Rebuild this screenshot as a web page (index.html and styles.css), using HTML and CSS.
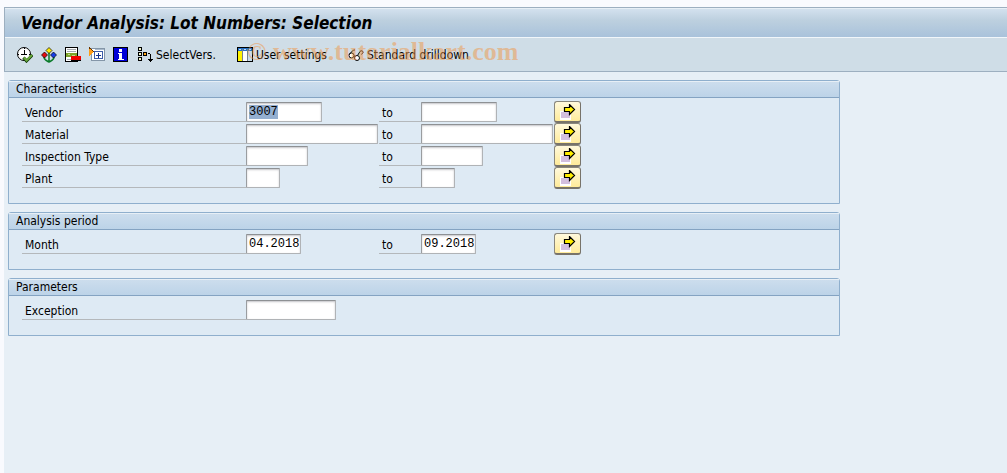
FILE: index.html
```
<!DOCTYPE html>
<html lang="en">
<head>
    <meta charset="UTF-8">
    <meta name="viewport" content="width=device-width, initial-scale=1.0">
    <title>Vendor Analysis: Lot Numbers: Selection</title>
    <link rel="stylesheet" href="styles.css">
</head>
<body>
    <!-- Shared icons -->
    <svg class="defs" width="0" height="0">
        <symbol id="multi" viewBox="0 0 16 16">
            <path fill="#fff" d="M0 7h11v9H0z"/>
            <path fill="#d3bfdf" d="M1 8h9v6H1z"/>
            <path fill="#ffee00" stroke="#000" stroke-width="1.200" d="M4.500 3.500h5v-3l5 5-5 5v-3h-5z"/>
        </symbol>
    </svg>

    <header>
        <h1>Vendor Analysis: Lot Numbers: Selection</h1>
        <div class="toolbar">
            <button class="tool" aria-label="Execute">
                <svg width="16" height="16" viewBox="0 0 16 16">
                    <circle cx="7" cy="7" r="6.500" fill="#fff" stroke="#000"/>
                    <path stroke="#000" fill="none" d="M7.500 3v5M4 7.500h6M7.500 1v1M7.500 12v1M1 7.500h1M12 7.500h1"/>
                    <path stroke="#123c08" stroke-width="3" fill="none" d="M6.500 10.500l3 3.500 6-6"/>
                    <path stroke="#69a83c" stroke-width="2" fill="none" d="M7 10.500l2.500 3 5.500-5.500"/>
                </svg>
            </button>
            <button class="tool" aria-label="Get variant">
                <svg width="16" height="16" viewBox="0 0 16 16">
                    <path stroke="#087a28" stroke-width="1.500" fill="none" d="M8 5v10M3 10c0 3 2 3.500 5 5 3-1.500 5-2 5-5"/>
                    <path fill="#ffe900" stroke="#000" stroke-width=".7" d="M8 .5L11 3.500 8 6.500 5 3.500z"/>
                    <path fill="#e30b12" stroke="#000" stroke-width=".7" d="M3.500 5L6.500 8l-3 3-3-3z"/>
                    <path fill="#163ce8" stroke="#000" stroke-width=".7" d="M12.500 5l3 3-3 3-3-3z"/>
                </svg>
            </button>
            <button class="tool" aria-label="Delete row">
                <svg width="16" height="16" viewBox="0 0 16 16" shape-rendering="crispEdges">
                    <path fill="#fff" stroke="#000" d="M.5.5h12v14H.5z"/>
                    <path fill="#a5a9ae" d="M2 2h9v1H2zM2 4h9v1H2zM2 12h4v1H2z"/>
                    <path fill="#7da329" d="M1 6h11v4H1z"/>
                    <path fill="#c5d98a" d="M3 7h2v1H3zM7 8h3v1H7z"/>
                    <path fill="#f00000" d="M6 9h10v4H6z"/>
                    <path fill="#000" d="M6 13h10v1H6z"/>
                </svg>
            </button>
            <button class="tool" aria-label="Dynamic selections">
                <svg width="16" height="16" viewBox="0 0 16 16" shape-rendering="crispEdges">
                    <path fill="#fff" stroke="#8496a8" d="M2.500 1.500h13v12h-13z"/>
                    <path fill="#a9b9ca" d="M6 2h9v1H6z"/>
                    <path fill="#fff" stroke="#3c5ca8" d="M5.500 4.500h8v7h-8z"/>
                    <path fill="#16328c" d="M9 6h1v5H9zM7 8h5v1H7z"/>
                    <path fill="#ff9c16" d="M0 1l5 4-5 4z"/>
                    <path fill="#603000" d="M0 0h1v2H0zM1 1h1v1H1zM2 2h1v1H2zM3 3h1v1H3zM4 4h1v1H4z"/>
                </svg>
            </button>
            <button class="tool" aria-label="Information">
                <svg width="16" height="16" viewBox="0 0 16 16" shape-rendering="crispEdges">
                    <path fill="#0000d8" stroke="#000" d="M.5.5h14v14H.5z"/>
                    <path fill="#fff" d="M6 2h3v3H6zM5 6h4v6h2v1H5v-1h1V7H5z"/>
                </svg>
            </button>
            <button class="tool">
                <svg width="16" height="16" viewBox="0 0 16 16" shape-rendering="crispEdges">
                    <path fill="#eff2c9" stroke="#000" d="M1.500.5h3v3h-3zM1.500 5.500h3v3h-3zM1.500 10.500h3v3h-3z"/>
                    <path fill="#ffa51c" stroke="#000" d="M6.500 5.500h3v3h-3z"/>
                    <path fill="#000" d="M11 6h2v1h1v5h2v1h-1v1h-1v1h-1v-1h-1v-1h-1v-1h2V7h-2z"/>
                </svg>
                SelectVers.
            </button>
            <button class="tool apart">
                <svg width="16" height="16" viewBox="0 0 16 16" shape-rendering="crispEdges">
                    <path fill="#fff" stroke="#000" d="M.5.500h15v14H.5z"/>
                    <path fill="#2672c8" d="M1 1h14v3H1z"/>
                    <path fill="#fff200" d="M1 4h4v10H1z"/>
                    <path fill="#c8dbea" d="M11 4h4v10h-4z"/>
                    <path fill="#78828c" d="M5 2h1v12H5zM10 2h1v12h-1z"/>
                    <path fill="#c8dbea" d="M2 2h2v1H2zM7 2h2v1H7zM12 2h2v1h-2z"/>
                </svg>
                User settings
            </button>
            <button class="tool apart">
                <svg width="16" height="16" viewBox="0 0 16 16">
                    <g fill="none" stroke="#000">
                        <path d="M1 7.500L5.500 3l1.500 0M9.500 8.500L12 4.500c1-1.500 3.500-.5 3 1l-1.500 2M6 9l2 .5"/>
                        <circle cx="3.500" cy="8.500" r="2.500" fill="#fff"/>
                        <circle cx="9" cy="11" r="2.500" fill="#fff"/>
                    </g>
                </svg>
                Standard drilldown
            </button>
            <span class="watermark">© www.tutorialkart.com</span>
        </div>
    </header>

    <main>
        <!-- Characteristics -->
        <section class="group">
            <h2>Characteristics</h2>
            <div class="row">
                <label for="vendor">Vendor</label>
                <div><input type="text" id="vendor" class="w-vendor" value="3007"></div>
                <label for="vendorTo">to</label>
                <div><input type="text" id="vendorTo" class="w-vendor"></div>
                <button class="multi" aria-label="Multiple selection"><svg width="16" height="16"><use href="#multi"/></svg></button>
            </div>
            <div class="row">
                <label for="material">Material</label>
                <div><input type="text" id="material" class="w-material"></div>
                <label for="materialTo">to</label>
                <div><input type="text" id="materialTo" class="w-material"></div>
                <button class="multi" aria-label="Multiple selection"><svg width="16" height="16"><use href="#multi"/></svg></button>
            </div>
            <div class="row">
                <label for="inspection">Inspection Type</label>
                <div><input type="text" id="inspection" class="w-type"></div>
                <label for="inspectionTo">to</label>
                <div><input type="text" id="inspectionTo" class="w-type"></div>
                <button class="multi" aria-label="Multiple selection"><svg width="16" height="16"><use href="#multi"/></svg></button>
            </div>
            <div class="row">
                <label for="plant">Plant</label>
                <div><input type="text" id="plant" class="w-plant"></div>
                <label for="plantTo">to</label>
                <div><input type="text" id="plantTo" class="w-plant"></div>
                <button class="multi" aria-label="Multiple selection"><svg width="16" height="16"><use href="#multi"/></svg></button>
            </div>
        </section>

        <!-- Analysis period -->
        <section class="group">
            <h2>Analysis period</h2>
            <div class="row">
                <label for="month">Month</label>
                <div><input type="text" id="month" class="w-month" value="04.2018"></div>
                <label for="monthTo">to</label>
                <div><input type="text" id="monthTo" class="w-month" value="09.2018"></div>
                <button class="multi" aria-label="Multiple selection"><svg width="16" height="16"><use href="#multi"/></svg></button>
            </div>
        </section>

        <!-- Parameters -->
        <section class="group">
            <h2>Parameters</h2>
            <div class="row">
                <label for="exception">Exception</label>
                <div><input type="text" id="exception" class="w-exception"></div>
            </div>
        </section>
    </main>

    <script>
        // Start with the first field selected
        const vendor = document.getElementById('vendor');
        vendor.focus();
        vendor.select();
    </script>
</body>
</html>
```
FILE: styles.css
```
* {
    box-sizing: border-box;
}
html {
    background-color: #f9fafe;
}
body {
    font-family: "DejaVu Sans Condensed", Tahoma, sans-serif;
    font-size: 12px;
    color: #000;
    margin: 7px 0 0 4px;
    min-height: calc(100vh - 7px);
    background-color: #e7eff6;
}
.defs {
    position: absolute;
}
header {
    border: 1px solid #9dafc0;
    border-right: none;
}
h1 {
    margin: 0;
    padding: 0 16px;
    font-size: 17px;
    font-style: italic;
    line-height: 28px;
    height: 30px;
    border-top: 1px solid #e7eff6;
    border-bottom: 1px solid #f1f6fa;
    background: linear-gradient(#d3e1ee, #bdd0df 40%, #a9c2db);
}
.toolbar {
    position: relative;
    display: flex;
    align-items: center;
    gap: 8px;
    height: 33px;
    padding: 0 12px;
    background-color: #cfdde7;
}
.tool {
    display: flex;
    align-items: center;
    gap: 3px;
    padding: 0;
    border: none;
    background: none;
    font: inherit;
    color: inherit;
    white-space: nowrap;
    cursor: pointer;
}
.apart {
    margin-left: 13px;
}
.watermark {
    position: absolute;
    left: 242px;
    top: 0;
    font-family: "Liberation Serif", serif;
    font-size: 26px;
    font-weight: bold;
    line-height: 28px;
    color: rgba(240, 150, 70, 0.5);
    pointer-events: none;
}
main {
    display: flex;
    flex-direction: column;
    gap: 8px;
    max-width: 840px;
    padding: 8px 4px;
}
.group {
    border: 1px solid #8fafcd;
    border-radius: 3px 3px 0 0;
    padding-bottom: 14px;
    background-color: #deeaf4;
}
h2 {
    margin: 0 0 3px;
    padding: 0 7px;
    font-size: 12px;
    font-weight: normal;
    line-height: 15px;
    border-top: 1px solid #e7eff6;
    border-bottom: 1px solid #84a3c2;
    background: linear-gradient(#ccdded, #bcd3e8);
}
.row {
    display: grid;
    grid-template-columns: 224px 133px 42px 133px 27px;
    height: 22px;
    padding-left: 13px;
}
label {
    height: 21px;
    padding-left: 3px;
    line-height: 24px;
    border-bottom: 1px solid #b4b8bb;
}
input {
    display: block;
    height: 20px;
    margin: 1px 0 0;
    padding: 0 1px 0 2px;
    font-family: "Liberation Mono", monospace;
    font-size: 12px;
    color: #000;
    border: 1px solid #b0b3b6;
    border-top-color: #8e9194;
    border-left-color: #9a9da0;
    border-radius: 1px;
    background-color: #fff;
    box-shadow: inset 0 1px 2px #c4c4c8;
}
input:focus {
    outline: none;
}
input::selection {
    background-color: #94afd0;
    color: #000;
}
.w-vendor { width: 76px; }
.w-material { width: 132px; }
.w-type { width: 62px; }
.w-plant { width: 34px; }
.w-month { width: 55px; }
.w-exception { width: 90px; }
.multi {
    display: flex;
    align-items: flex-start;
    justify-content: center;
    height: 22px;
    padding: 2px 0 0;
    border: 1px solid #8a877d;
    border-bottom: 2px solid #77736a;
    border-right-color: #77736a;
    border-radius: 3px;
    background: linear-gradient(#fff9dc, #ffeb9a);
    cursor: pointer;
}
```
